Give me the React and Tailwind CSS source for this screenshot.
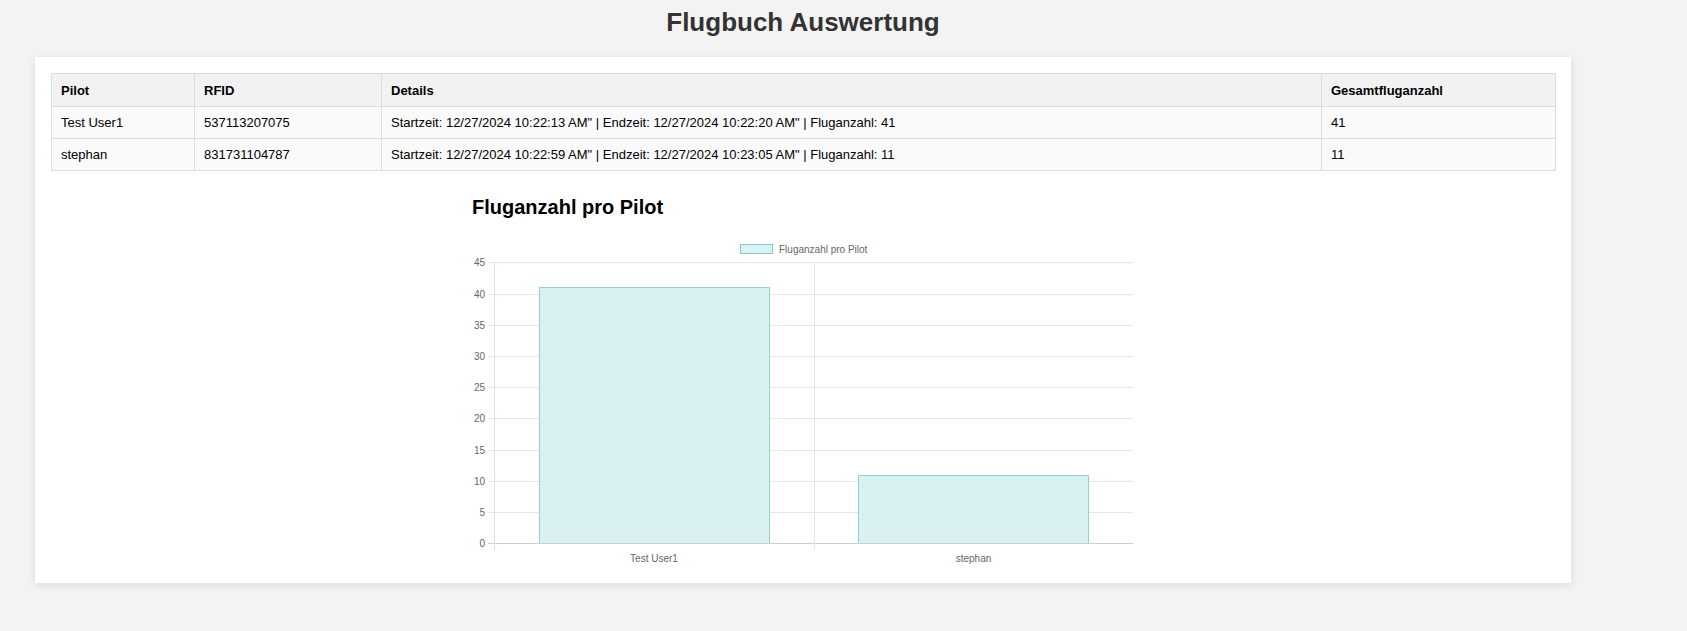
const rows = [
  {
    pilot: 'Test User1',
    rfid: '537113207075',
    details: 'Startzeit: 12/27/2024 10:22:13 AM" | Endzeit: 12/27/2024 10:22:20 AM" | Fluganzahl: 41',
    total: 41,
  },
  {
    pilot: 'stephan',
    rfid: '831731104787',
    details: 'Startzeit: 12/27/2024 10:22:59 AM" | Endzeit: 12/27/2024 10:23:05 AM" | Fluganzahl: 11',
    total: 11,
  },
];

const ticks = [0, 5, 10, 15, 20, 25, 30, 35, 40, 45];
const zeroY = 311.3;
const unit = 6.244;

const BarChart = () => (
  <svg width="662" height="335" viewBox="0 0 662 335" className="block" style={{ fontFamily: '"Liberation Sans", Arial, sans-serif' }}>
    {/* legend */}
    <rect x="268.5" y="12.5" width="32" height="9" fill="#dbf2f2" stroke="#80cccc" strokeWidth="1" />
    <text x="307" y="20.5" fontSize="10" fill="#666">Fluganzahl pro Pilot</text>

    {/* grid */}
    {ticks.map((t) => {
      const y = Math.round(zeroY - t * unit) + 0.5;
      return (
        <g key={t}>
          <line x1="16" x2="661" y1={y} y2={y} stroke={t === 0 ? '#cfcfcf' : '#e6e6e6'} strokeWidth="1" />
          <text x="13" y={y + 3.5} fontSize="10" fill="#666" textAnchor="end">{t}</text>
        </g>
      );
    })}
    <line x1="22.5" x2="22.5" y1="30" y2="318" stroke="#e0e0e0" strokeWidth="1" />
    <line x1="342.5" x2="342.5" y1="30" y2="318" stroke="#e6e6e6" strokeWidth="1" />

    {/* bars */}
    {rows.map((r, i) => {
      const x = i === 0 ? 67.5 : 386.5;
      const top = Math.round(zeroY - r.total * unit) + 0.5;
      const bottom = Math.round(zeroY);
      return (
        <g key={r.pilot}>
          <rect x={x} y={top} width="230" height={bottom - top} fill="#d9f1f1" />
          <path d={`M${x} ${bottom} V${top} H${x + 230} V${bottom}`} fill="none" stroke="#8fd3d3" strokeWidth="1" />
          <text x={i === 0 ? 182 : 501.5} y="330" fontSize="10" fill="#666" textAnchor="middle">{r.pilot}</text>
        </g>
      );
    })}
  </svg>
);

export default function App() {
  return (
    <div className="min-h-screen w-full bg-[#f3f3f3] pt-[7px] font-['Liberation_Sans',Arial,sans-serif]">
      <div className="ml-[35px] w-[1536px]">
        <h1 className="text-center text-[26px] leading-[30px] font-bold text-[#333]">Flugbuch Auswertung</h1>

        <div className="mt-[20px] bg-white p-4 shadow-[0_2px_8px_rgba(0,0,0,0.1)]">
          <table className="w-[1504px] table-fixed border-collapse text-[13px] leading-[15px] text-black">
            <colgroup>
              <col className="w-[143px]" />
              <col className="w-[187px]" />
              <col className="w-[940px]" />
              <col className="w-[234px]" />
            </colgroup>
            <thead>
              <tr className="bg-[#f2f2f2]">
                <th className="h-[33px] border border-[#dddddd] px-[9px] text-left font-bold">Pilot</th>
                <th className="border border-[#dddddd] px-[9px] text-left font-bold">RFID</th>
                <th className="border border-[#dddddd] px-[9px] text-left font-bold">Details</th>
                <th className="border border-[#dddddd] px-[9px] text-left font-bold">Gesamtfluganzahl</th>
              </tr>
            </thead>
            <tbody>
              {rows.map((r) => (
                <tr key={r.rfid} className="bg-[#fafafa]">
                  <td className="h-[32px] border border-[#dddddd] px-[9px]">{r.pilot}</td>
                  <td className="border border-[#dddddd] px-[9px]">{r.rfid}</td>
                  <td className="border border-[#dddddd] px-[9px]">{r.details}</td>
                  <td className="border border-[#dddddd] px-[9px]">{r.total}</td>
                </tr>
              ))}
            </tbody>
          </table>

          <div className="mx-auto mt-[25px] w-[662px]">
            <h2 className="text-[20px] leading-[23px] font-bold text-black">Fluganzahl pro Pilot</h2>
            <div className="mt-[13px]">
              <BarChart />
            </div>
          </div>
        </div>
      </div>
    </div>
  );
}
